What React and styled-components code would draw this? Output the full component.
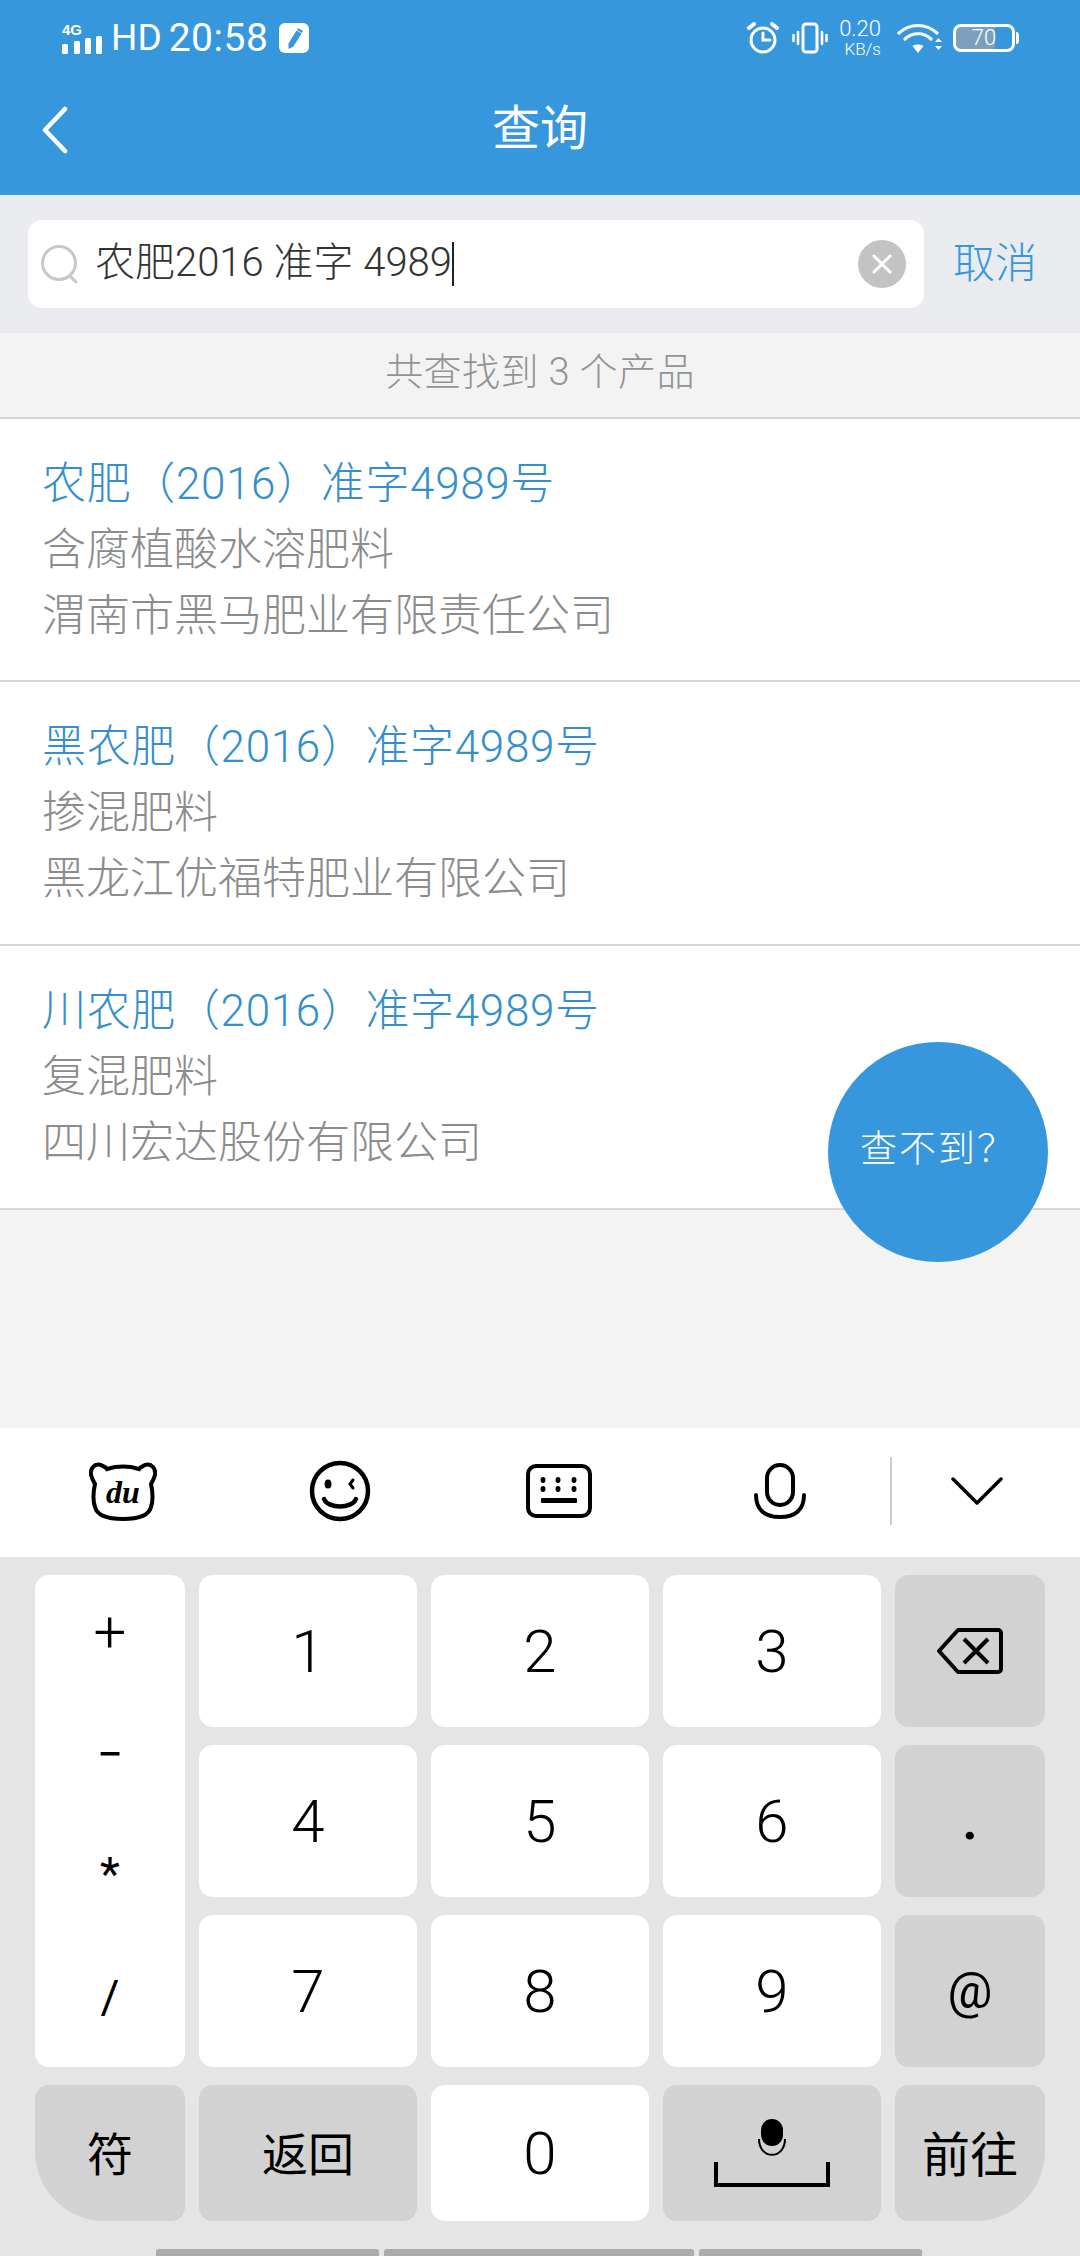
import React from "react";
import styled, { createGlobalStyle } from "styled-components";

const FONT = `Roboto, "Noto Sans CJK SC", sans-serif`;
const BLUE = "#3797dd";

const GlobalStyle = createGlobalStyle`
  html, body { margin: 0; padding: 0; }
  body { font-family: ${FONT}; font-weight: 300; background: #f3f3f3; }
`;

const results = [
  { code: "农肥（2016）准字4989号", type: "含腐植酸水溶肥料", company: "渭南市黑马肥业有限责任公司" },
  { code: "黑农肥（2016）准字4989号", type: "掺混肥料", company: "黑龙江优福特肥业有限公司" },
  { code: "川农肥（2016）准字4989号", type: "复混肥料", company: "四川宏达股份有限公司" },
];

const Page = styled.div`
  position: relative;
  width: 1080px;
  height: 2256px;
  overflow: hidden;
  display: flex;
  flex-direction: column;
  background: #f3f3f3;
`;

const Header = styled.header`
  height: 195px;
  flex: none;
  background: ${BLUE};
  color: #fff;
  display: flex;
  flex-direction: column;
`;

const StatusBar = styled.div`
  height: 76px;
  padding: 0 61px 0 62px;
  display: flex;
  align-items: center;
  justify-content: space-between;
`;

const StatusGroup = styled.div`
  display: flex;
  align-items: center;
`;

const StatusText = styled.span`
  font-size: ${(p) => p.$size}px;
  font-weight: 400;
  line-height: 40px;
  letter-spacing: ${(p) => p.$track || 0}px;
  margin-left: ${(p) => p.$left}px;
`;

const Speed = styled.div`
  font-size: 22px;
  line-height: 20px;
  text-align: right;
  margin: 2px 0 0 11px;
  span { display: block; font-size: 17px; line-height: 20px; }
`;

const Battery = styled.div`
  width: 62px;
  height: 28px;
  box-sizing: border-box;
  border: 3px solid #fff;
  border-radius: 8px;
  font-size: 22px;
  line-height: 22px;
  text-align: center;
  overflow: hidden;
  background: linear-gradient(90deg, #7d9fbc 0 70%, transparent 70%);
`;

const BatteryTip = styled.div`
  width: 3px;
  height: 12px;
  margin-left: 1px;
  background: #fff;
  border-radius: 0 3px 3px 0;
`;

const NavBar = styled.div`
  flex: 1;
  display: flex;
  align-items: center;
  justify-content: center;
  position: relative;
  padding-bottom: 14px;
`;

const NavTitle = styled.h1`
  margin: 0;
  font-size: 48px;
  font-weight: 400;
  line-height: 56px;
`;

const BackButton = styled.div`
  position: absolute;
  left: 41px;
  top: 30px;
  line-height: 0;
`;

const SearchArea = styled.div`
  height: 138px;
  flex: none;
  box-sizing: border-box;
  padding: 25px 0 25px 28px;
  background: #e9ebee;
  display: flex;
`;

const SearchBox = styled.div`
  width: 896px;
  height: 88px;
  background: #fff;
  border-radius: 14px;
  display: flex;
  align-items: center;
  padding: 0 18px 0 12px;
  box-sizing: border-box;
`;

const SearchText = styled.div`
  flex: 1;
  margin-left: 15px;
  padding-bottom: 2px;
  font-size: 40px;
  line-height: 50px;
  color: #333;
  white-space: pre;
  display: flex;
  align-items: center;
`;

const Caret = styled.i`
  display: inline-block;
  width: 2px;
  height: 44px;
  margin-top: 2px;
  background: #222;
`;

const ClearButton = styled.div`
  width: 48px;
  height: 48px;
  border-radius: 50%;
  background: #c3c3c3;
  display: flex;
  align-items: center;
  justify-content: center;
`;

const CancelLink = styled.div`
  margin-left: 29px;
  font-size: 42px;
  line-height: 88px;
  color: ${BLUE};
`;

const CountBar = styled.div`
  height: 84px;
  flex: none;
  line-height: 78px;
  text-align: center;
  font-size: 38px;
  letter-spacing: 0.4px;
  color: #939393;
  background: #f3f3f3;
  border-bottom: 2px solid #d6d6d6;
  white-space: pre;
`;

const ResultRow = styled.div`
  height: 262px;
  flex: none;
  padding-left: 42px;
  background: #fff;
  border-bottom: 2px solid #d6d6d6;
  display: flex;
  flex-direction: column;
  justify-content: center;

  ${CountBar} + & {
    height: 261px;
  }
`;

const RowLine = styled.div`
  font-size: 44px;
  line-height: 66px;
  letter-spacing: ${(p) => (p.$title ? "0.65px" : "0")};
  color: ${(p) => (p.$title ? "#348fcc" : "#8c8c8c")};
  white-space: nowrap;
`;

const Spacer = styled.div`
  flex: 1;
`;

const Fab = styled.div`
  position: absolute;
  left: 828px;
  top: 1042px;
  width: 220px;
  height: 220px;
  box-sizing: border-box;
  padding-bottom: 12px;
  border-radius: 50%;
  background: ${BLUE};
  color: #fff;
  font-size: 37px;
  letter-spacing: 2px;
  display: flex;
  align-items: center;
  justify-content: center;
`;

const KeyboardBar = styled.div`
  height: 129px;
  flex: none;
  box-sizing: border-box;
  padding: 0 16px 3px 13px;
  background: #fff;
  display: grid;
  grid-template-columns: 219px 215px 223px 219px 1fr;
  align-items: center;
  justify-items: center;
  position: relative;
`;

const BarDivider = styled.div`
  position: absolute;
  left: 890px;
  top: 29px;
  width: 2px;
  height: 68px;
  background: #ccc;
`;

const Keyboard = styled.div`
  height: 699px;
  flex: none;
  box-sizing: border-box;
  background: #e5e5e5;
  padding: 18px 35px 0;
  display: flex;
  flex-direction: column;
`;

const KeyGrid = styled.div`
  display: grid;
  grid-template-columns: 150px 218px 218px 218px 150px;
  grid-template-rows: 152px 152px 152px 136px;
  column-gap: 14px;
  row-gap: 18px;
`;

const Key = styled.div`
  box-sizing: border-box;
  background: ${(p) => (p.$gray ? "#d2d2d2" : "#fff")};
  border-radius: ${(p) => p.$radius || "14px"};
  color: #000;
  font-size: ${(p) => p.$size || 60}px;
  font-weight: ${(p) => p.$weight || 300};
  padding-bottom: ${(p) => p.$lift || 0}px;
  display: flex;
  align-items: center;
  justify-content: center;
`;

const SymbolKey = styled(Key)`
  grid-row: span 3;
  flex-direction: column;
  justify-content: flex-start;
  padding-top: 30px;
`;

const SymbolRow = styled.span`
  display: block;
  height: 54px;
  line-height: 54px;
  font-size: ${(p) => p.$size || 46}px;
  font-weight: ${(p) => p.$weight || 400};
  margin-top: ${(p) => p.$top}px;
`;

const NavHandles = styled.div`
  margin-top: 28px;
  margin-left: 121px;
  display: flex;
  gap: 5px;
`;

const Handle = styled.div`
  width: ${(p) => p.$w}px;
  height: 7px;
  background: #ababab;
  border-radius: 3px 3px 0 0;
`;

const App = () => (
  <Page>
    <GlobalStyle />
    <Header>
      <StatusBar>
        <StatusGroup>
          <svg width="42" height="34" viewBox="0 0 42 34" fill="#fff">
            <text x="0" y="14" fontSize="15" fontWeight="700" fontFamily="Liberation Sans">4G</text>
            <rect x="0" y="23" width="6" height="10" rx="1.5" />
            <rect x="12" y="20" width="6" height="13" rx="1.5" />
            <rect x="23" y="17" width="6" height="16" rx="1.5" />
            <rect x="34" y="15" width="6" height="18" rx="1.5" />
          </svg>
          <StatusText $size={37} $left={7}>HD</StatusText>
          <StatusText $size={39} $left={7} $track={0.5}>20:58</StatusText>
          <svg width="30" height="30" viewBox="0 0 30 30" style={{ marginLeft: 11 }}>
            <rect width="30" height="30" rx="6" fill="#fff" />
            <path d="M17.500 7.500l5 3-8 13-5 2.500 0-5.500z" fill={BLUE} />
            <path d="M19 5l5 3-1 2-5-3z" fill={BLUE} />
          </svg>
        </StatusGroup>
        <StatusGroup>
          <svg width="34" height="32" viewBox="0 0 34 32" fill="none" stroke="#fff" strokeWidth="3" strokeLinecap="round">
            <circle cx="17" cy="18" r="12" />
            <path d="M17 11v7h7" />
            <path d="M3 6l5-4M31 6l-5-4" strokeWidth="4" />
          </svg>
          <svg width="36" height="32" viewBox="0 0 36 32" fill="none" stroke="#fff" strokeWidth="2.600" strokeLinecap="round" style={{ marginLeft: 12 }}>
            <rect x="11" y="2" width="14" height="28" rx="3" strokeWidth="3" />
            <path d="M6 10v12M30 10v12M1.500 13v6M34.500 13v6" />
          </svg>
          <Speed>0.20<span>KB/s</span></Speed>
          <svg width="46" height="31" viewBox="0 0 46 31" fill="none" stroke="#fff" strokeWidth="3.200" strokeLinecap="round" style={{ marginLeft: 16 }}>
            <path d="M2 10c11-10 27-10 38 0" />
            <path d="M8 16c7-7 19-7 26 0" />
            <path d="M15.500 23L21 30l5.500-7c-3-2-8-2-11 0z" fill="#fff" stroke="none" />
            <path d="M38 19l3.500-4 3.500 4zM38 23l3.500 4 3.500-4z" fill="#fff" stroke="none" />
          </svg>
          <Battery style={{ marginLeft: 10 }}>70</Battery>
          <BatteryTip />
        </StatusGroup>
      </StatusBar>
      <NavBar>
        <NavTitle>查询</NavTitle>
        <BackButton>
          <svg width="28" height="48" viewBox="0 0 28 48" fill="none" stroke="#fff" strokeWidth="4.500" strokeLinecap="round" strokeLinejoin="round">
            <path d="M24 3L4 24l20 21" />
          </svg>
        </BackButton>
      </NavBar>
    </Header>

    <SearchArea>
      <SearchBox>
        <svg width="40" height="42" viewBox="0 0 40 42" fill="none" stroke="#c8c8c8" strokeWidth="3" strokeLinecap="round">
          <circle cx="19" cy="20" r="16.500" />
          <path d="M30 33l6 6" />
        </svg>
        <SearchText>农肥2016 准字 4989<Caret /></SearchText>
        <ClearButton>
          <svg width="22" height="22" viewBox="0 0 22 22" fill="none" stroke="#fff" strokeWidth="3" strokeLinecap="round">
            <path d="M3 3l16 16M19 3L3 19" />
          </svg>
        </ClearButton>
      </SearchBox>
      <CancelLink>取消</CancelLink>
    </SearchArea>

    <CountBar>共查找到 3 个产品</CountBar>

    {results.map((r) => (
      <ResultRow key={r.code}>
        <RowLine $title>{r.code}</RowLine>
        <RowLine>{r.type}</RowLine>
        <RowLine>{r.company}</RowLine>
      </ResultRow>
    ))}

    <Spacer />

    <KeyboardBar>
      <svg width="68" height="60" viewBox="0 0 68 60" fill="none" stroke="#000" strokeWidth="4">
        <path d="M12 4C5 2 1 8 2 14c1 4 3 7 4 9-2 9-2 17 0 23 2 8 12 12 28 12s26-4 28-12c2-6 2-14 0-23 1-2 3-5 4-9 1-6-3-12-10-10-2 1-5 2-6 4-10-3-22-3-32 0-1-2-4-3-6-4z" />
        <text x="34" y="42" fontSize="32" fontStyle="italic" fontWeight="700" fontFamily="Liberation Serif" textAnchor="middle" fill="#000" stroke="none">du</text>
      </svg>
      <svg width="62" height="62" viewBox="0 0 62 62" fill="none" stroke="#000" strokeWidth="4.500" strokeLinecap="round">
        <circle cx="31" cy="31" r="28" />
        <ellipse cx="19" cy="24" rx="3.500" ry="4.500" fill="#000" stroke="none" />
        <path d="M44 20l-3 4 3 4" strokeWidth="3" />
        <path d="M15 39c4 10 28 10 32 0" />
      </svg>
      <svg width="66" height="54" viewBox="0 0 66 54" fill="none" stroke="#000" strokeWidth="4">
        <rect x="2" y="2" width="62" height="50" rx="8" />
        <g fill="#000" stroke="none">
          <ellipse cx="17" cy="16" rx="2.500" ry="3" /><ellipse cx="32" cy="16" rx="2.500" ry="3" /><ellipse cx="48" cy="16" rx="2.500" ry="3" />
          <ellipse cx="17" cy="25" rx="2.500" ry="3" /><ellipse cx="32" cy="25" rx="2.500" ry="3" /><ellipse cx="48" cy="25" rx="2.500" ry="3" />
          <rect x="15" y="34" width="36" height="5" rx="1" />
        </g>
      </svg>
      <svg width="52" height="56" viewBox="0 0 52 56" fill="none" stroke="#000" strokeWidth="4" strokeLinecap="round">
        <rect x="13" y="2" width="26" height="40" rx="13" />
        <path d="M2 32c0 14 8 22 24 22s24-8 24-22" />
      </svg>
      <svg width="52" height="30" viewBox="0 0 52 30" fill="none" stroke="#000" strokeWidth="3.500" strokeLinecap="round" strokeLinejoin="round">
        <path d="M2 3l24 24L50 3" />
      </svg>
      <BarDivider />
    </KeyboardBar>

    <Keyboard>
      <KeyGrid>
        <SymbolKey>
          <SymbolRow $top={0} $size={58} $weight={300}>+</SymbolRow>
          <SymbolRow $top={68}>−</SymbolRow>
          <SymbolRow $top={66}>*</SymbolRow>
          <SymbolRow $top={69}>/</SymbolRow>
        </SymbolKey>
        <Key>1</Key>
        <Key>2</Key>
        <Key>3</Key>
        <Key $gray>
          <svg width="68" height="48" viewBox="0 0 68 48" fill="none" stroke="#000" strokeWidth="4" strokeLinejoin="round">
            <path d="M22 3h40a3 3 0 0 1 3 3v36a3 3 0 0 1-3 3H22L3 24z" />
            <path d="M28 12l24 24M52 12L28 36" />
          </svg>
        </Key>
        <Key>4</Key>
        <Key>5</Key>
        <Key>6</Key>
        <Key $gray $weight={500} $lift={6}>.</Key>
        <Key>7</Key>
        <Key>8</Key>
        <Key>9</Key>
        <Key $gray $size={50} $weight={400}>@</Key>
        <Key $gray $size={46} $weight={400} $lift={4} $radius="14px 14px 14px 70px">符</Key>
        <Key $gray $size={46} $weight={400} $lift={4}>返回</Key>
        <Key>0</Key>
        <Key $gray>
          <svg width="116" height="68" viewBox="0 0 116 68" fill="#000">
            <rect x="47" y="0" width="22" height="27" rx="11" />
            <path d="M45 20c0 21 26 21 26 0" fill="none" stroke="#000" strokeWidth="2" />
            <path d="M2 43v23h112V43" fill="none" stroke="#000" strokeWidth="4" />
          </svg>
        </Key>
        <Key $gray $size={48} $weight={400} $lift={4} $radius="14px 14px 70px 14px">前往</Key>
      </KeyGrid>
      <NavHandles>
        <Handle $w={223} />
        <Handle $w={310} />
        <Handle $w={223} />
      </NavHandles>
    </Keyboard>

    <Fab>查不到？</Fab>
  </Page>
);

export default App;
